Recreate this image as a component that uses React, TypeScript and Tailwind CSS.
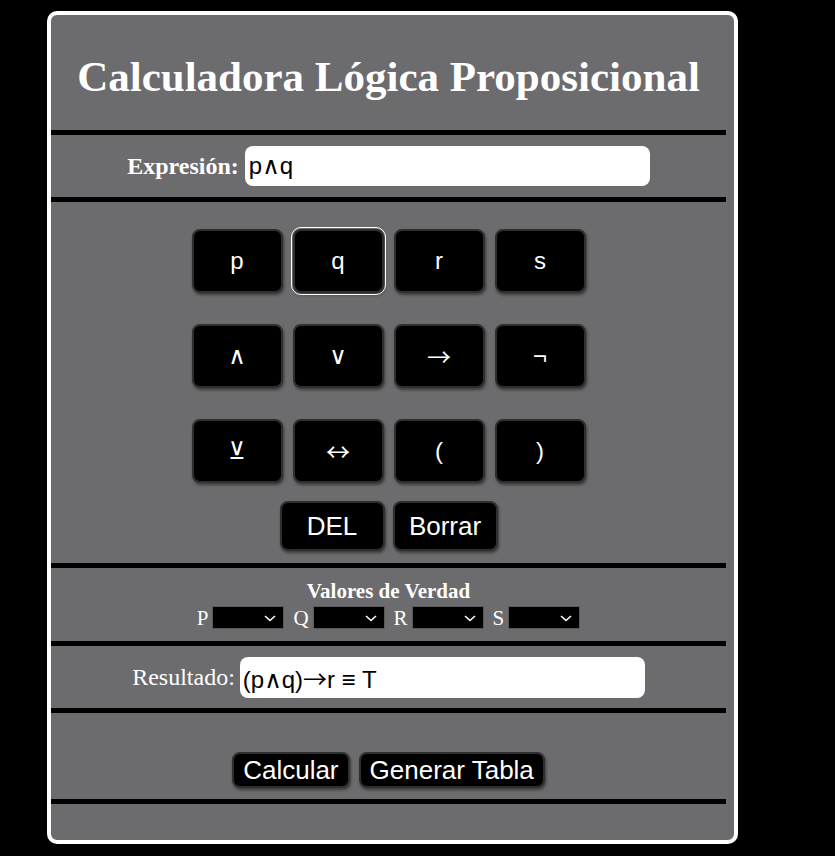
import React from "react";

const serif = { fontFamily: '"Liberation Serif", "Times New Roman", serif' };
const sans = { fontFamily: '"Liberation Sans", "DejaVu Sans", Arial, sans-serif' };
const arrowFont = { fontFamily: '"Noto Sans CJK SC", "DejaVu Sans", sans-serif' };

function Rule() {
  return <div className="h-[5px] w-[675px] bg-black" />;
}

function KeyBtn({ label, focused, arrow }: { label: string; focused?: boolean; arrow?: boolean }) {
  return (
    <button
      className={
        "h-[64px] w-[91px] rounded-[8px] border-2 border-[#2f2f2f] bg-black text-[24px] text-white shadow-[1px_2px_3px_rgba(0,0,0,0.45)] flex items-center justify-center " +
        (focused ? "outline outline-1 outline-white outline-offset-[1px]" : "")
      }
      style={sans}
    >
      <span style={arrow ? arrowFont : undefined}>{label}</span>
    </button>
  );
}

function Sel({ name }: { name: string }) {
  return (
    <>
      <span className="text-[21px] leading-[24px] text-white">{name}</span>
      <span className="relative inline-block h-[23px] w-[72px] border border-[#5a5a5a] bg-black">
        <svg
          className="absolute right-[7px] top-[8px]"
          width="12"
          height="7"
          viewBox="0 0 12 7"
          fill="none"
        >
          <path d="M1 1 L6 5.5 L11 1" stroke="white" strokeWidth="1.6" />
        </svg>
      </span>
    </>
  );
}

export default function App() {
  return (
    <div className="min-h-screen w-full bg-black pt-[11px] pl-[47px]">
      <div className="w-[691px] h-[833px] rounded-[10px] border-4 border-white bg-[#6c6b6d] overflow-hidden">
        <div className="w-[675px] flex flex-col" style={serif}>
          {/* Title */}
          <div className="h-[115px] pt-[38px] flex justify-center">
            <h1 className="text-[43px] leading-[48px] font-bold text-white whitespace-nowrap">
              Calculadora Lógica Proposicional
            </h1>
          </div>
          <Rule />
          {/* Expression */}
          <div className="h-[62px] flex items-center justify-center gap-[6px]">
            <span className="text-[24px] font-bold text-white">Expresión:</span>
            <div
              className="h-[40px] w-[405px] rounded-[8px] bg-white px-[4px] text-[24px] leading-[40px] text-black"
              style={sans}
            >
              p∧q
            </div>
          </div>
          <Rule />
          {/* Keypad */}
          <div className="h-[361px] pt-[27px] flex flex-col items-center">
            <div className="grid grid-cols-[repeat(4,91px)] gap-x-[10px] gap-y-[31px]">
              <KeyBtn label="p" />
              <KeyBtn label="q" focused />
              <KeyBtn label="r" />
              <KeyBtn label="s" />
              <KeyBtn label="∧" />
              <KeyBtn label="∨" />
              <KeyBtn label="→" arrow />
              <KeyBtn label="¬" />
              <KeyBtn label="⊻" />
              <KeyBtn label="↔" arrow />
              <KeyBtn label="(" />
              <KeyBtn label=")" />
            </div>
            <div className="mt-[18px] flex gap-[8px]">
              <button
                className="h-[50px] w-[105px] rounded-[8px] border-2 border-[#2f2f2f] bg-black text-[26px] text-white shadow-[1px_2px_3px_rgba(0,0,0,0.45)]"
                style={sans}
              >
                DEL
              </button>
              <button
                className="h-[50px] w-[105px] rounded-[8px] border-2 border-[#2f2f2f] bg-black text-[26px] text-white shadow-[1px_2px_3px_rgba(0,0,0,0.45)]"
                style={sans}
              >
                Borrar
              </button>
            </div>
          </div>
          <Rule />
          {/* Valores de verdad */}
          <div className="h-[73px] pt-[11px] flex flex-col items-center">
            <div className="text-[21px] leading-[24px] font-bold text-white">Valores de Verdad</div>
            <div className="mt-[1px] h-[27px] flex items-center gap-[4px]">
              <Sel name="P" />
              <span className="w-[1px]" />
              <Sel name="Q" />
              <span className="w-[1px]" />
              <Sel name="R" />
              <span className="w-[1px]" />
              <Sel name="S" />
            </div>
          </div>
          <Rule />
          {/* Result */}
          <div className="h-[62px] flex items-center justify-center gap-[5px]">
            <span className="text-[24px] text-white">Resultado:</span>
            <div
              className="h-[41px] w-[405px] rounded-[8px] bg-white px-[3px] text-[24px] leading-[41px] text-black whitespace-nowrap"
              style={sans}
            >
              (p∧q)<span style={arrowFont}>→</span>r ≡ T
            </div>
          </div>
          <Rule />
          {/* Actions */}
          <div className="h-[86px] pt-[39px] flex justify-center gap-[9px]" style={sans}>
            <button className="h-[36px] rounded-[8px] border-2 border-[#2f2f2f] bg-black px-[9px] text-[26px] leading-[30px] text-white shadow-[1px_2px_3px_rgba(0,0,0,0.45)]">
              Calcular
            </button>
            <button className="h-[36px] rounded-[8px] border-2 border-[#2f2f2f] bg-black px-[9px] text-[26px] leading-[30px] text-white shadow-[1px_2px_3px_rgba(0,0,0,0.45)]">
              Generar Tabla
            </button>
          </div>
          <Rule />
        </div>
      </div>
    </div>
  );
}
